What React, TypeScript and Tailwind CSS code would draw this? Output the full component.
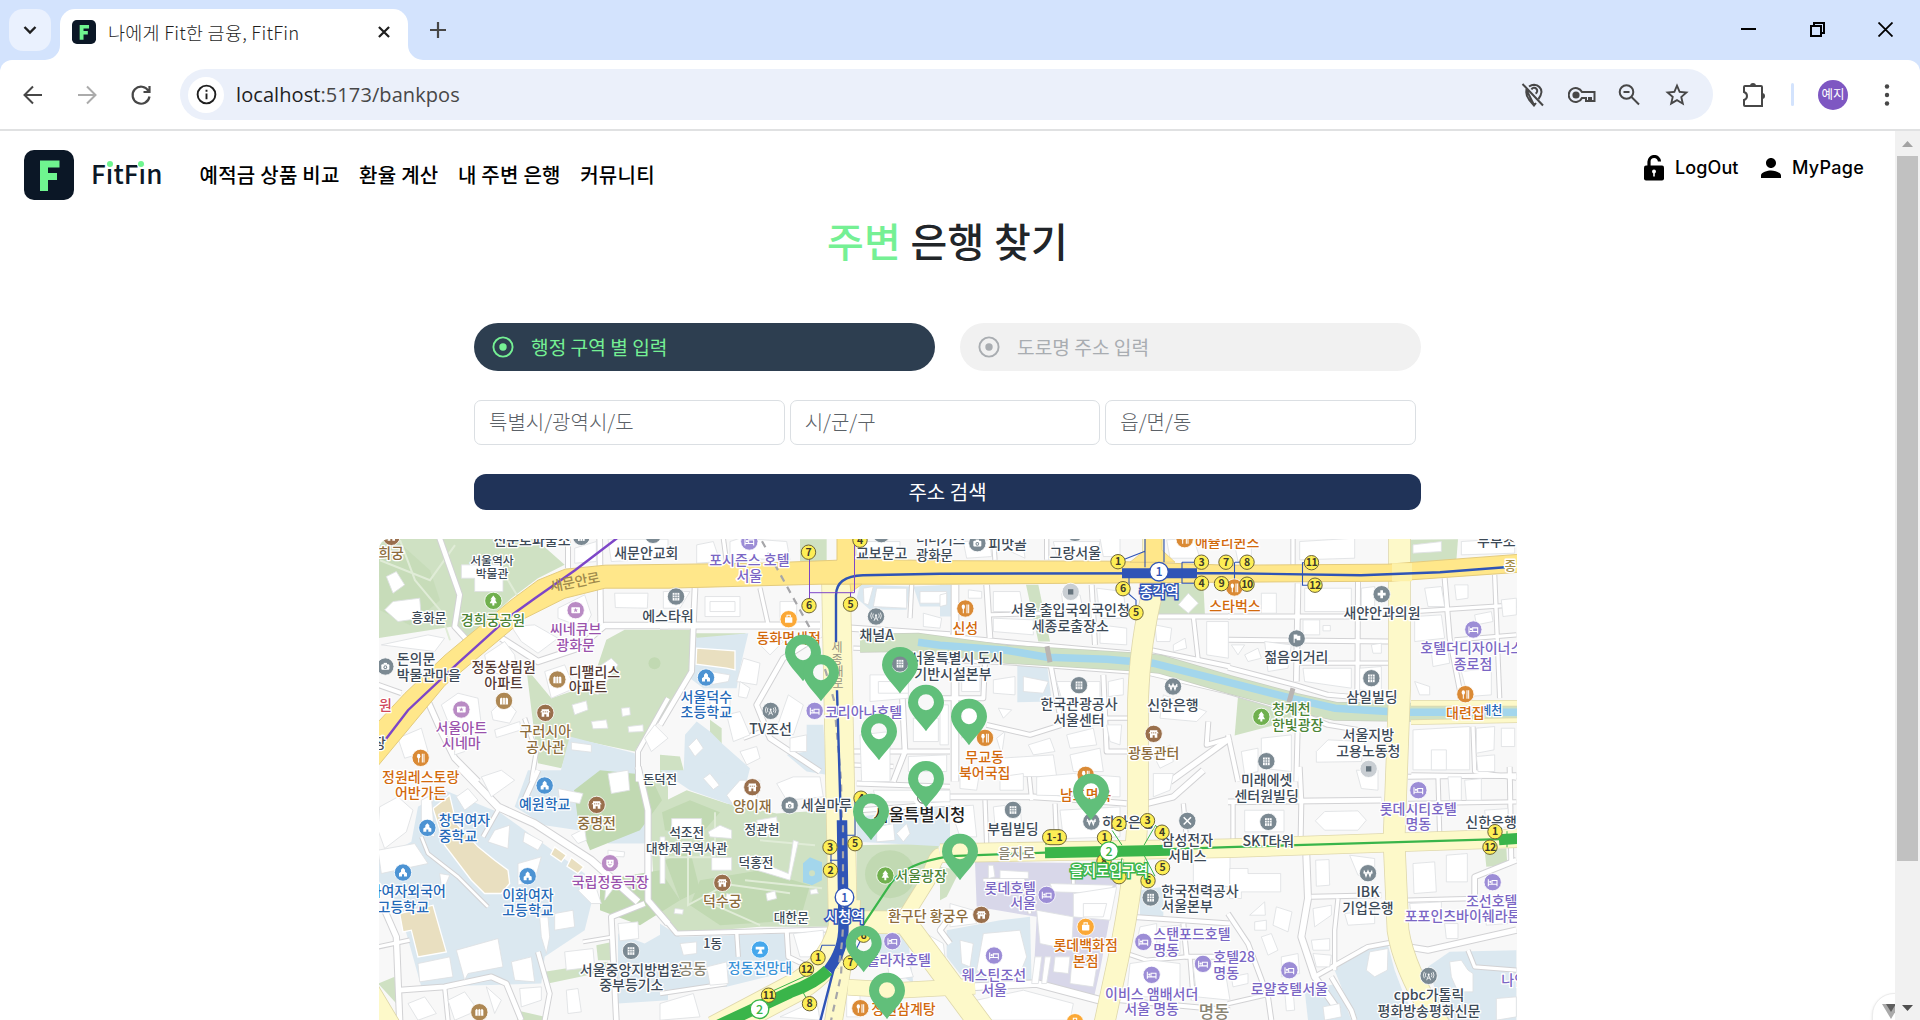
import React from "react";
import { MdPerson, MdStarBorder } from "react-icons/md";

const KR = "font-['Noto_Sans_CJK_KR',sans-serif]";

/* ---------- map data: each sector is drawn in its own 3x local grid ---------- */

type Label = [number, number, string, string, number?, ("start" | "end" | "middle")?];
type Poi = [number, number, string];
type Sector = {
  x: number;
  y: number;
  green: string;
  blue: string;
  tan?: string;
  violet?: string;
  roads: string;
  buildings: string;
  labels: Label[];
  pois: Poi[];
};

const INK: Record<string, string> = {
  g: "#3d4a57",
  p: "#7a66c4",
  o: "#d2690c",
  b: "#2469b8",
  c: "#8c6c3c",
  m: "#9a52ac",
  t: "#4b8436",
  n: "#553a33",
  v: "#3a93d8",
  r: "#d0485c",
  y: "#a58d45",
  k: "#222222",
  s: "#8a8574",
};

const sectors: Sector[] = [
  {
    x: 378, y: 538,
    green: "0,0 470,0 560,80 480,120 400,180 265,305 225,265 0,300;685,305 740,275 955,275 940,370 870,480 770,640 580,600 550,690 480,675 445,390 520,480 640,440",
    blue: "575,595 770,645 780,730 540,730",
    roads: "14|185,0 245,170 230,265 290,330;16|370,300 480,370 600,330 680,262 870,262;14|665,0 668,260;12|570,0 570,90;12|0,440 70,465;16|150,490 190,580 230,660 300,730;10|440,540 475,640 460,730;12|870,480 780,640 780,730",
    buildings: "25,115 55,100 80,140 45,165;20,215 45,190 125,180 130,240 60,250;250,80 375,80 375,160 290,160 290,120 250,120;540,210 620,170 640,230 620,270 540,240;710,165 810,165 808,210 712,208;400,265 470,260 540,300 480,345 430,310;320,350 380,310 410,350 420,420 330,400;500,400 560,380 590,450 520,480;640,400 700,360 720,380 660,470 640,460;340,520 380,480 415,520 395,555 345,545;190,500 240,465 300,480 310,560 210,550;350,575 425,550 430,575 355,598;582,500 625,488 630,515 590,530;640,550 685,545 690,570 645,572;730,510 755,508 757,530 733,535;580,612 640,620 640,642 580,635;750,565 795,560 796,580 752,582;60,600 130,570 150,640 80,660;230,600 265,590 260,640 230,650;590,30 655,10 655,70 590,75;690,3 870,3 870,60 700,70;10,320 150,290 200,300 170,340;800,600 830,560 870,600 820,640",
    labels: [
      [20, 45, "경희궁", "c"], [342, 67, "서울역사\n박물관", "g", 35.5], [462, 5, "신문로파출소", "g"], [805, 45, "새문안교회", "g"],
      [345, 245, "경희궁공원", "t"], [153, 239, "흥화문", "g", 38], [593, 272, "씨네큐브\n광화문", "m"], [870, 232, "에스타워", "g"],
      [56, 362, "돈의문\n박물관마을", "g", 42, "start"], [377, 387, "정동상림원\n아파트", "n"], [572, 400, "디팰리스\n아파트", "n", 42, "start"],
      [22, 500, "원", "r"], [4, 614, "장", "g"], [250, 568, "서울아트\n시네마", "m"], [502, 578, "구러시아\n공사관", "c"], [128, 716, "정원레스토랑\n어반가든", "o"],
    ],
    pois: [[40, -4, "palace"], [610, -4, "gray"], [825, -10, "gray"], [346, 188, "tree"], [593, 216, "star"], [22, 385, "camera"], [538, 424, "apt"], [378, 488, "apt"], [502, 524, "palace"], [250, 514, "star"], [128, 659, "food"]],
  },
  {
    x: 378, y: 770,
    green: "500,605 690,575 700,600 510,640;655,525 705,515 705,570 660,570;0,640 50,620 55,700;415,720 500,740 500,760 420,760;810,50 870,0 870,440 830,390",
    blue: "120,110 200,60 370,130 620,310 640,400 620,480 500,560 490,640 130,650 60,400 0,330 0,270 100,215;450,0 780,0 805,100 800,220 690,220 680,150 600,180 500,165 410,110;720,490 800,520 870,480 870,690 720,700",
    tan: "165,115 215,75 235,160 300,230 350,270 390,300 395,340 370,370 320,370 280,330 200,225;65,430 165,405 205,545 120,560 100,480 75,485;530,230 565,255 550,275 518,253;580,262 617,290 600,310 567,288",
    roads: "20|245,-10 360,110 470,160 640,270 780,395;14|430,110 480,0;10|360,120 315,200;16|20,420 55,500 65,750;14|65,660 200,650 340,620 385,640 430,750;10|200,650 210,750;12|480,545 515,670 500,750;16|780,-10 810,120 810,390 870,460;14|800,400 700,440 715,750;8|615,515 705,500;8|130,200 150,250 240,320 330,410;10|0,530 95,510",
    buildings: "5,110 60,80 105,120 85,185 20,235 0,180;130,90 160,75 170,200 130,190;235,80 270,55 300,90 260,120;350,180 395,165 390,235 330,215;440,185 495,215 480,240 435,215;540,55 615,70 605,100 545,90;690,10 750,0 755,60 700,70;580,195 620,175 625,210 600,220;420,280 490,260 470,330 420,345;0,240 110,220 150,280 10,310;235,540 360,505 375,590 270,610 260,630;120,580 215,560 225,620 125,635;400,575 460,560 470,635 410,630;485,440 510,440 515,500 505,550 490,500;530,430 585,420 590,470 530,480;560,545 645,535 650,590 565,600;720,460 780,455 782,505 725,512;90,700 140,680 175,730 120,750;210,690 260,665 300,720 230,750;325,650 370,690 350,730;425,655 490,650 490,690 430,710;565,660 600,655 610,725 570,730;600,360 650,340 670,400 640,400;685,330 710,350 680,390;310,20 370,0 410,30 340,80;690,240 740,245 738,260 690,258;185,310 215,315 205,340 190,345",
    labels: [
      [500, 101, "예원학교", "b"], [656, 158, "중명전", "c"], [182, 150, "창덕여자\n중학교", "b", 42, "start"], [88, 362, "화여자외국어", "b"], [76, 411, "고등학교", "b"],
      [450, 373, "이화여자\n고등학교", "b"], [697, 334, "국립정동극장", "m"], [760, 598, "서울중앙지방법원\n중부등기소", "g"],
    ],
    pois: [[500, 46, "school"], [656, 104, "palace"], [148, 173, "school"], [75, 307, "school"], [449, 318, "school"], [696, 279, "face"], [759, 542, "gray"], [304, 726, "apt"]],
  },
  {
    x: 660, y: 538,
    green: "420,3 500,3 500,75 420,75;105,285 260,285 220,300 110,300;0,275 95,280 90,400 40,500 0,540;150,545 185,570 185,620 150,600;600,305 745,295 870,300 870,345 760,332 600,330;0,650 60,655 80,730 0,730",
    blue: "95,300 265,285 240,390 230,450 130,450 90,420;600,140 750,145 740,215 630,215 590,180;760,145 870,140 870,205 780,205;110,550 150,580 190,620 270,690 260,730 70,730 75,590;490,560 500,710 440,700 380,650 440,640 440,560",
    tan: "110,330 225,338 225,395 200,390 108,378",
    roads: "10|300,150 325,262;18|0,262 480,262;14|105,150 100,262 95,400 0,560;14|480,290 370,360 290,500 330,600 480,700;16|570,270 870,290;14|720,330 735,640 700,730;12|580,640 870,640;10|580,330 870,338;10|755,140 750,240;10|250,600 330,570;10|190,0 200,75;10|570,680 700,685",
    buildings: "135,175 240,175 240,235 135,235;150,190 225,190 225,220 150,220;10,160 90,160 60,210 10,210;360,190 410,190 410,250 360,250;250,360 300,375 290,440 230,430;240,430 270,450 260,480 235,475;300,320 340,290 370,310 330,350;385,470 430,500 400,590 350,570;200,530 240,520 270,590 220,610;85,625 110,600 130,630 105,655;240,640 290,625 300,660 260,680;650,150 740,150 740,210 640,205;780,160 860,160 860,195 780,195;790,225 845,240 840,270 790,265;630,410 745,410 745,480 630,490;655,430 745,430 745,465 655,465;760,540 835,540 835,610 760,610;600,590 690,580 690,730 605,730;745,655 860,650 860,700 745,700;110,20 160,10 180,70 110,75;210,10 240,0 380,10 390,65 210,60;590,10 720,10 720,50 590,50;150,400 210,410 205,430 150,440;150,480 210,480 210,520 150,510;390,600 440,590 440,640 390,640;610,150 640,145 625,200 612,195",
    labels: [
      [268, 66, "포시즌스 호텔\n서울", "p"], [386, 299, "동화면세점", "o"], [665, 45, "교보문고", "g"], [768, 3, "더더커스\n광화문", "g", 40, "start"],
      [650, 291, "채널A", "g"], [139, 475, "서울덕수\n초등학교", "b"], [332, 573, "TV조선", "g"], [495, 521, "코리아나호텔", "p", 42, "start"], [750, 360, "서울특별시 도시", "g", 42, "start"], [763, 408, "기반시설본부", "g", 42, "start"],
    ],
    pois: [[268, 10, "hotel"], [48, 175, "build"], [386, 243, "shop"], [648, 235, "antenna"], [138, 418, "school"], [332, 518, "antenna"], [464, 518, "hotel"], [720, 376, "build"], [664, -12, "gray"]],
  },
  {
    x: 660, y: 770,
    green: "0,100 80,60 200,100 350,130 500,120 505,470 300,470 50,490 0,420;590,225 840,220 770,400 620,440 590,420",
    blue: "0,0 160,0 240,20 230,110 90,60;0,460 60,500 380,490 400,600 200,650 0,660;590,140 870,110 870,230 590,215;640,480 740,470 760,640 640,560",
    roads: "12|0,430 50,490 505,478;10|230,485 235,560;12|600,120 870,100;12|380,480 385,560 470,600;12|590,40 870,50;10|0,670 200,640;14|870,520 840,480 870,440",
    buildings: "130,25 150,10 178,45 160,58;35,145 125,145 125,200 35,200;145,185 180,165 215,180 215,205 150,200;250,255 385,310 400,210 415,215 390,330 240,285;155,262 215,262 215,300 155,300;318,370 345,362 350,385 322,392;45,415 70,418 68,432 42,430;450,360 470,355 475,370 452,372;200,75 240,30 300,30 290,90 230,120;350,40 400,20 480,20 490,80 380,90;60,520 110,515 110,550 70,555;140,590 200,575 205,640 150,645;400,490 490,480 490,560 420,560;650,170 700,160 705,210 650,215;710,190 740,160 750,190 730,215;680,570 740,560 760,620 690,630;640,60 870,60 870,95 650,95;0,700 100,670 120,740 0,750;780,480 850,520 860,600 790,560;200,370 240,380 230,400 195,395;0,200 15,200 15,340 0,340;360,740 470,690 480,750;560,670 600,670 600,740 560,740;290,150 350,140 355,190 300,195",
    labels: [
      [0, 28, "돈덕전", "g", 37], [277, 106, "양이재", "c"], [422, 105, "세실마루", "g", 42, "start"], [80, 188, "석조전\n대한제국역사관", "g", 38], [306, 178, "정관헌", "g", 38],
      [288, 276, "덕홍전", "g", 38], [187, 392, "덕수궁", "c"], [394, 441, "대한문", "g", 38], [158, 520, "1동", "g", 38], [99, 596, "공동", "s", 46], [300, 592, "정동전망대", "v"],
      [640, 135, "서울특별시청", "k", 50, "start"], [706, 316, "서울광장", "t", 42, "start"], [684, 436, "환구단 황궁우", "c", 42, "start"], [620, 568, "플라자호텔", "p", 42, "start"], [634, 716, "정원삼계탕", "o", 42, "start"],
    ],
    pois: [[277, 51, "palace"], [389, 105, "camera"], [187, 338, "palace"], [300, 538, "view"], [676, 316, "tree"], [697, 513, "hotel"], [601, 714, "food"], [788, 84, "ring"]],
  },
  {
    x: 940, y: 538,
    green: "258,140 295,140 330,310 295,310;650,140 790,135 795,235 655,230",
    blue: "0,140 35,140 35,235 0,235;232,380 320,370 335,490 232,492",
    roads: "14|140,140 150,300;20|45,140 45,730;12|455,140 465,320;10|150,230 330,225;12|0,290 50,298 570,345;12|0,365 200,372 570,400;12|330,370 365,560 270,590 140,560;12|490,410 500,640 565,640;12|0,480 130,480 135,370;12|640,235 870,235;10|760,235 775,370;12|630,335 870,385;12|630,405 870,462;10|500,540 565,540;12|805,550 800,620 870,600;16|870,600 690,730;10|160,0 165,65;10|320,0 320,65",
    buildings: "160,160 240,160 250,220 160,220;85,155 125,160 125,180 85,180;160,425 225,415 225,470 160,465;250,415 325,430 310,465 250,460;175,510 215,515 190,540;365,165 420,170 430,220 370,220;715,200 745,165 775,195 745,225;645,260 695,270 690,310 650,310;700,320 735,300 740,330 700,340;500,560 545,560 540,620 510,610;505,430 550,420 550,470 505,475;265,620 330,600 345,640 280,650;380,590 460,570 470,620 390,630;170,600 195,580 185,650;390,650 480,630 490,700 400,700;180,660 340,650 350,715 180,715;0,170 20,165 20,200 0,205;670,470 800,520 770,550 660,540;640,650 690,620 700,670 660,690;70,10 150,5 155,55 80,60;190,30 250,20 255,60;340,10 480,10 470,55 350,55;480,0 540,0 540,55 490,55;470,150 550,160 560,240 480,240;480,260 560,270 560,320 480,315;160,240 280,245 280,290 160,280;800,250 865,250 865,360 800,350;350,430 480,430 480,560 390,570;65,385 120,385 120,460 65,460;65,500 130,500 120,550 65,600;0,500 25,500 25,620 0,620;680,5 760,0 780,60 690,60",
    labels: [
      [145, 18, "피맛골", "g", 42, "start"], [406, 43, "그랑서울", "g"], [765, 10, "애슐리퀸즈", "o", 42, "start"], [76, 268, "신성", "o"], [391, 216, "서울 출입국외국인청\n세종로출장소", "g"],
      [417, 497, "한국관광공사\n서울센터", "g"], [699, 500, "신한은행", "g"], [641, 643, "광통관터", "c"], [134, 656, "무교동\n북어국집", "o"], [885, 203, "스타벅스", "o"],
    ],
    pois: [[112, 15, "camera"], [734, 3, "food"], [405, -16, "gray"], [76, 211, "food"], [392, 161, "dot"], [417, 441, "build"], [699, 445, "won"], [641, 587, "palace"], [135, 599, "food"], [883, 148, "food"], [437, 712, "food"]],
  },
  {
    x: 940, y: 770,
    green: "0,290 60,300 20,380 0,390",
    blue: "20,480 180,450 270,440 275,640 90,650 20,560;0,80 20,60 10,210 0,210;600,360 670,350 670,440 600,440",
    violet: "105,275 550,280 525,360 480,600 460,690 320,640 280,640 290,440 110,410",
    roads: "14|20,80 280,80 430,90 560,100;10|135,90 140,220;10|265,-10 275,90;10|345,100 350,215;16|620,100 700,80 790,0;20|90,650 290,640 480,690;12|570,440 870,460;12|730,460 740,560 870,560;10|560,550 620,570 740,560;12|540,690 870,720;10|750,560 760,690;10|730,100 740,210;8|130,330 250,330 270,430;8|400,280 400,360",
    buildings: "160,110 240,100 245,165 165,165;145,285 160,285 165,320 145,325;180,300 265,305 265,325 180,325;330,340 520,345 510,370 340,365;290,420 400,440 395,540 300,520;400,370 530,350 510,450 400,440;430,400 500,400 490,440 430,440;285,560 305,560 295,640 275,640;315,560 333,560 320,640 305,640;345,560 390,560 385,610 340,605;395,580 470,590 460,650 390,640;600,470 650,460 650,520 590,520;660,470 720,465 720,550 660,545;570,580 640,570 720,580 720,680 560,680;760,590 850,570 870,690 770,680;130,490 240,480 260,560 240,610 170,640 110,600;60,510 100,520 90,590 65,580;180,20 250,10 250,60 180,60;60,0 120,0 110,60 60,55;30,110 100,105 110,200 60,200;110,690 250,660 400,700 390,750 150,750;360,120 540,110 540,200 370,205;290,20 400,10 540,20 540,80 290,75;760,250 870,250 870,350 760,340;30,400 100,420 110,460 30,470;640,10 700,10 690,60 640,80",
    labels: [
      [437, 74, "남포면옥", "o"], [487, 154, "하나은행", "g", 42, "start"], [219, 176, "부림빌딩", "g"], [742, 210, "삼성전자\n서비스", "g"], [230, 249, "을지로", "s", 40],
      [288, 352, "롯데호텔\n서울", "p", 42, "end"], [664, 361, "한국전력공사\n서울본부", "g", 42, "start"], [640, 492, "스탠포드호텔\n명동", "p", 42, "start"], [437, 525, "롯데백화점\n본점", "o"],
      [820, 560, "호텔28\n명동", "p", 42, "start"], [162, 613, "웨스틴조선\n서울", "p"], [635, 670, "이비스 앰배서더\n서울 명동", "p"], [822, 725, "명동", "s", 50],
    ],
    pois: [[437, 14, "food"], [219, 119, "build"], [454, 154, "won"], [742, 152, "tool"], [320, 374, "hotel"], [632, 382, "build"], [124, 434, "palace"], [437, 470, "shop"], [610, 515, "hotel"], [162, 556, "hotel"], [789, 581, "hotel"], [635, 614, "hotel"], [405, 756, "shop"]],
  },
  {
    x: 1228, y: 538,
    green: "540,5 690,3 685,68 545,72;30,475 130,490 190,500 200,545 20,592",
    blue: "",
    roads: "10|195,-5 195,80;14|210,135 205,430;12|390,130 388,480;12|0,235 390,235;12|0,305 480,310;10|205,375 480,375;12|0,388 200,440 300,470 480,485;12|0,460 200,520 300,560 480,590;10|555,220 865,200;12|650,120 665,300 700,480;10|800,110 815,480;12|210,530 205,730;12|0,590 30,730;10|735,565 740,700 865,720;10|680,305 865,290;10|550,710 865,715",
    buildings: "20,20 70,10 70,60 30,70;215,10 380,0 380,60 215,65;590,150 640,145 650,205 600,205;560,235 640,230 650,300 560,310;680,140 720,140 720,180 685,185;225,245 275,245 275,290 225,290;285,262 307,262 307,278 285,278;10,320 50,320 30,350;50,350 90,330 100,360 60,370;110,310 190,320 180,390 120,400;400,150 440,145 440,210 400,210;430,320 460,315 460,345 435,345;395,390 460,385 460,460 395,455;560,430 605,445 605,470 575,470;740,230 790,220 795,250 745,260;555,575 725,565 725,695 555,695;610,635 655,635 655,695 610,695;745,570 800,565 798,635 745,645;745,655 800,650 800,700 750,700;820,570 860,570 860,625 820,625;40,640 90,630 90,700 50,710;100,600 190,590 190,700 100,690;265,640 300,605 410,610 400,670 265,672;820,185 865,180 865,230 825,235;610,340 660,335 665,375 615,385;700,400 790,390 790,470 720,475;225,390 370,390 370,450 230,430;100,165 145,165 145,225 100,225;555,20 640,10 640,40 555,45;700,10 860,0 860,45 700,50;230,150 370,150 370,220 230,220",
    labels: [
      [805, 8, "두부조", "g"], [462, 223, "새얀안과의원", "g"], [205, 356, "젊음의거리", "g"], [577, 330, "호텔더디자이너스", "p", 42, "start"], [735, 377, "종로점", "p"],
      [432, 476, "삼일빌딩", "g"], [132, 513, "청계천\n한빛광장", "t", 42, "start"], [790, 517, "계천", "b", 36], [712, 524, "대련집", "o"], [421, 590, "서울지방\n고용노동청", "g"], [847, 82, "종", "y", 38],
    ],
    pois: [[461, 168, "cross"], [206, 301, "flag"], [736, 274, "hotel"], [430, 420, "build"], [712, 468, "food"], [100, 536, "tree"], [422, 692, "dot"], [115, 669, "build"]],
  },
  {
    x: 1228, y: 770,
    green: "770,240 835,235 838,285 775,290",
    blue: "320,600 400,530 480,525 500,600 530,680 570,750 380,750;600,590 665,545 865,540 865,750 650,750;230,660 330,640 370,750 240,750",
    roads: "14|0,95 460,90;12|215,-10 220,95 218,200;10|15,100 15,210;18|235,255 240,385 220,500 260,620 330,720;12|250,380 460,375;10|330,385 320,480 320,600;12|260,620 420,530 500,515;12|0,430 60,520 120,680 130,750;10|0,700 130,670;12|540,20 865,15;10|630,20 635,190;16|540,530 600,540 865,480;10|540,390 740,385;14|740,390 740,320 865,270;12|845,-10 850,280;12|310,620 370,720 380,750;10|540,100 865,95;10|720,540 740,590 865,600",
    buildings: "50,120 168,120 168,185 50,185;262,152 290,124 390,122 415,150 390,180 290,180;5,295 60,295 60,310 158,310 158,365 40,365 40,385 5,385;263,270 303,268 305,345 265,348;555,280 620,275 625,365 558,370;655,255 718,250 718,335 655,335;65,435 110,395 112,435;80,455 115,450 115,480 80,480;145,410 192,425 180,485 135,465;255,415 310,405 310,435 260,470;100,500 130,490 150,540 120,555;250,510 305,505 305,540 255,540;10,620 60,610 60,640 15,650;160,560 210,550 215,610 160,620;285,710 335,700 340,740 290,750;365,255 440,265 440,310 390,315;350,430 440,420 440,460 360,465;545,400 640,395 640,430 550,435;650,460 690,460 690,505 655,505;425,545 480,535 478,600 440,620 415,600;665,575 700,570 720,600 735,610 735,665 690,665 670,620;805,685 865,680 865,740 805,750;660,20 700,20 700,90 665,90;710,30 760,25 760,90 715,90;170,660 195,655 200,720 175,722;385,0 450,0 450,60 400,55;770,120 840,115 840,170 775,175;770,400 840,395 840,460 775,465;255,550 310,555 305,590 265,590",
    labels: [
      [116, 30, "미래에셋\n센터원빌딩", "g"], [571, 115, "롯데시티호텔\n명동", "p"], [712, 155, "신한은행", "g", 42, "start"], [121, 212, "SKT타워", "g"], [420, 365, "IBK\n기업은행", "g"],
      [714, 391, "조선호텔", "p", 42, "start"], [530, 438, "포포인츠바이쉐라톤", "p", 42, "start"], [184, 656, "로얄호텔서울", "p"], [603, 674, "cpbc가톨릭\n평화방송평화신문", "g"], [820, 628, "나인", "p", 42, "start"],
    ],
    pois: [[571, 60, "hotel"], [121, 155, "build"], [420, 309, "won"], [794, 336, "hotel"], [184, 600, "hotel"], [602, 617, "antenna"]],
  },
];

const POI_FILL: Record<string, string> = {
  gray: "#7b8992", build: "#7b8992", camera: "#7b8992", antenna: "#7b8992", won: "#7b8992", cross: "#7b8992", flag: "#7b8992", tool: "#7b8992",
  hotel: "#9c8dd6", food: "#da8a35", shop: "#fba836", school: "#4c93d3", palace: "#996f4c", apt: "#ad8753",
  star: "#b98bc4", face: "#b98bc4", tree: "#70b04e", view: "#45a7ec", dot: "#c9ced3", ring: "#ffffff",
};

/* white symbol inside a point-of-interest disc, centred on the origin */
function Glyph({ kind }: { kind: string }) {
  const line = { fill: "none", stroke: "#fff", strokeWidth: 3.2 };
  switch (kind) {
    case "hotel":
      return <g><path d="M-13 -9V12M-13 6H13M13 12V-5H-2V6" {...line} /><circle cx="-7" cy="-1" r="3.4" fill="#fff" /></g>;
    case "food":
      return <g><ellipse cx="-6" cy="-5" rx="5" ry="7" fill="#fff" /><path d="M-6 0V14M5 -12V14M10 -12V14" {...line} /></g>;
    case "shop":
      return <g><rect x="-11" y="-6" width="22" height="17" rx="2" fill="#fff" /><path d="M-5 -6V-12H5V-6" {...line} /></g>;
    case "school":
      return <path d="M-12 12V2L-6 -2V-8L0 -14L6 -8V-2L12 2V12H3V5H-3V12Z" fill="#fff" />;
    case "palace":
      return <g><path d="M-16 -2L-11 -6V-11H11V-6L16 -2H11V12H3V4H-3V12H-11V-2Z" fill="#fff" /><path d="M-8 -3H8" stroke="#996f4c" strokeWidth="2.500" strokeDasharray="4 2" /></g>;
    case "apt":
      return <g><path d="M-12 11V-6L-8 -10L-4 -6L0 -10L4 -6L8 -10L12 -6V11Z" fill="#fff" /><path d="M-4 -6V11M4 -6V11" stroke="#ad8753" strokeWidth="2" /></g>;
    case "star":
      return <g><rect x="-13" y="-9" width="26" height="18" rx="2" fill="#fff" /><path d="M0 -7L2 -2H7L3 1L5 6L0 3L-5 6L-3 1L-7 -2H-2Z" fill="#b98bc4" /></g>;
    case "face":
      return <g><path d="M-11 -10H11V3Q8 13 0 13T-11 3Z" fill="#fff" /><path d="M-5 3Q0 9 5 3M-5 -5V-1M5 -5V-1" stroke="#b98bc4" strokeWidth="2.5" fill="none" /></g>;
    case "tree":
      return <path d="M0 -16L9 -4H5L11 7H3V14H-3V7H-11L-5 -4H-9Z" fill="#fff" />;
    case "camera":
      return <g><rect x="-12" y="-7" width="24" height="17" rx="3" fill="#fff" /><rect x="-5" y="-11" width="10" height="5" fill="#fff" /><circle r="5.5" cy="2" fill="#7b8992" /><circle r="2.6" cy="2" fill="#fff" /></g>;
    case "antenna":
      return <g><path d="M0 -2L-6 13M0 -2L6 13M-4 7H4M-8 -9Q-12 -2 -8 4M8 -9Q12 -2 8 4M-13 -12Q-19 -2 -13 7M13 -12Q19 -2 13 7" {...line} strokeWidth={2.4} /><circle cy="-4" r="3" fill="#fff" /></g>;
    case "won":
      return <path d="M-12 -8L-6 9L0 -7L6 9L12 -8M-14 -1H14" {...line} strokeWidth={3.6} />;
    case "cross":
      return <path d="M0 -12V12M-12 0H12" {...line} strokeWidth={8} />;
    case "flag":
      return <path d="M-9 13V-12H2V-8H11V5H0V1H-6V13Z" fill="#fff" />;
    case "tool":
      return <path d="M-11 -11L11 11M11 -11L-11 11" {...line} strokeWidth={4.5} />;
    case "view":
      return <path d="M-13 -8H13V0H5V4L8 13H-8L-2 4V0H-13Z" fill="#fff" />;
    case "dot":
      return <rect x="-8" y="-8" width="16" height="16" fill="#66747e" />;
    case "ring":
      return <circle r="15" fill="none" stroke="#555" strokeWidth="3" />;
    default:
      return <g><rect x="-10" y="-11" width="20" height="23" fill="#fff" /><path d="M-3.500 -11V12M3.500 -11V12M-10 -4H10M-10 3H10" stroke="#7b8992" strokeWidth="2" /></g>;
  }
}

const list = (s: string) => s.split(";").filter(Boolean);
const at = (s: Sector) => `translate(${s.x} ${s.y}) scale(0.33333)`;

function MinorRoads({ s, casing }: { s: Sector; casing?: boolean }) {
  return (
    <g transform={at(s)} fill="none" strokeLinejoin="round">
      {list(s.roads).map((r, i) => {
        const [w, pts] = r.split("|");
        return <polyline key={i} points={pts} stroke={casing ? "#d2d2d4" : "#ffffff"} strokeWidth={Number(w) + (casing ? 6 : 0)} />;
      })}
    </g>
  );
}

function MapLabel({ l }: { l: Label }) {
  const [x, y, text, ink, size = 42, anchor = "middle"] = l;
  return (
    <text x={x} y={y} textAnchor={anchor} fontSize={size} fill={INK[ink]} fontWeight={500} stroke="#fff" strokeWidth="8" strokeLinejoin="round" paintOrder="stroke">
      {text.split("\n").map((t, i) => (
        <tspan key={i} x={x} y={y + size * 0.36 + i * (size < 38 ? 39 : 47)}>{t}</tspan>
      ))}
    </text>
  );
}

/* station exits: x, y, number */
const exits: [number, number, string][] = [
  [808.5, 552, "7"], [860, 540, "4"], [809, 605.500, "6"], [850.500, 604, "5"], [1118, 561.500, "1"], [1123, 588.500, "6"], [1136, 612.500, "5"],
  [1201.500, 562, "3"], [1201.500, 583, "4"], [1226, 562, "7"], [1247, 562, "8"], [1221.500, 583.500, "9"], [1247, 584, "10"], [1311.500, 562.500, "11"], [1315, 585, "12"],
  [861, 798, "4"], [830, 847, "3"], [830.500, 870, "2"], [855, 843.500, "5"], [863.500, 935, "6"], [818, 957.500, "1"], [806.500, 969, "12"], [850.500, 962.500, "7"], [768.500, 995, "11"], [809.500, 1003.500, "8"],
  [1104.500, 837.500, "1"], [1119, 823.500, "2"], [1147.500, 820.500, "3"], [1162, 832, "4"], [1162.500, 867.500, "5"], [1148, 880.500, "6"], [1119, 876.500, "7"], [1104, 861, "8"],
  [1495, 831.500, "1"], [1490, 847, "12"],
];

const pins: [number, number][] = [
  [803, 681], [821, 701], [900, 693.300], [926, 731], [879, 760], [969, 745], [926, 807.300], [871, 840], [960, 880], [1091, 820], [863.700, 972], [887, 1019],
];

function Station({ x, y, n, name, ny, color }: { x: number; y: number; n: string; name: string; ny: number; color: string }) {
  return (
    <g>
      <circle cx={x} cy={y} r="9.300" fill="#fff" stroke={color} strokeWidth="1.400" />
      <text x={x} y={y + 4.500} fontSize="12.500" textAnchor="middle" fill={color} fontWeight={500}>{n}</text>
      <text x={x} y={ny} fontSize="14.500" textAnchor="middle" fill="#fff" stroke={color} strokeWidth="3" paintOrder="stroke" fontWeight={500} letterSpacing="-0.3">{name}</text>
    </g>
  );
}

const BLUE = "#2f54b6";
const GREEN = "#3ab54a";
const PALE = "#fdf9c9";
const PALE_EDGE = "#dfd8ac";
const AMBER = "#ffe78a";
const AMBER_EDGE = "#e3cb7e";

const paleRoads: [number, string][] = [
  [28, "M836 580L840 780L843 930"],
  [28, "M846 900Q846 955 800 985L715 1030"],
  [17, "M846 940Q842 970 832 1030"],
  [20, "M1153 530L1153 590Q1140 640 1138 700V810Q1135 880 1118 960L1104 1025"],
  [21, "M1399.500 530V690L1397 760L1394 840L1398 930Q1404 970 1440 1026"],
  [18, "M940 853L1228 848L1520 838"],
  [22, "M855 922H905L985 1030"],
  [14, "M940 855Q935 856 928 880L903 920"],
  [15, "M848 987L900 990L975 986"],
  [5, "M1411 703L1520 703"],
  [4, "M1411 722L1520 720"],
];

function BankMap() {
  return (
    <svg className="block h-[482px] w-[1138px] rounded-t-[10px] bg-[#f8f8f8]" viewBox="379 538.800 1138 482" fontFamily="'Noto Sans CJK KR', sans-serif">
      {sectors.map((s, k) => (
        <g key={k} transform={at(s)}>
          {list(s.green).map((p, i) => <polygon key={i} points={p} fill="#cfe1c3" />)}
          {list(s.blue).map((p, i) => <polygon key={i} points={p} fill="#dbe8f0" />)}
          {list(s.violet ?? "").map((p, i) => <polygon key={i} points={p} fill="#d8d7e9" />)}
          {list(s.tan ?? "").map((p, i) => <polygon key={i} points={p} fill="#e9dfc0" stroke="#fff" strokeWidth="4" />)}
        </g>
      ))}

      {/* woods and garden paths in the parks */}
      <g fill="#c1d9b2">
        <path d="M379 555L400 543L430 570L440 600L410 625L380 610Z" opacity="0.6" />
        <circle cx="654.500" cy="663" r="6" />
        <path d="M662 812L690 800L720 812L700 835L665 830ZM700 880L760 870L810 885L800 920L720 925L690 905Z" />
        <path d="M665 860L690 850L700 890L680 900Z" />
        <path d="M574 790L600 770L650 775L662 800L640 830L590 850L578 820ZM600 880L660 870L680 900L640 925L600 910Z" />
        <ellipse cx="890" cy="874" rx="25" ry="24" />
      </g>
      <g fill="none" stroke="#e0ecd7" strokeWidth="2">
        <path d="M662 857H715V812M688 845V905L727 884L790 893M745 880L822 888M715 905L760 925M760 840L815 845M400 540L415 580L440 610L450 640M455 545L430 580L380 560M480 560L505 575L520 600" />
      </g>
      <path d="M803 863L810 857L822 862V880L812 885L803 882Z" fill="#a3d6ec" />
      <circle cx="812" cy="873" r="3" fill="#cfe1c3" />

      {sectors.map((s, k) => <MinorRoads key={k} s={s} casing />)}
      {sectors.map((s, k) => <MinorRoads key={k} s={s} />)}

      {sectors.map((s, k) => (
        <g key={k} transform={at(s)} fill="#ffffff" stroke="#dfe1e3" strokeWidth="2.600">
          {list(s.buildings).map((p, i) => <polygon key={i} points={p} />)}
        </g>
      ))}

      {/* stream */}
      <path d="M860 643L918 642L1006 654L1140 662L1160 664L1228 684L1295 702L1335 711L1400 712H1520" fill="none" stroke="#c9cfc3" strokeWidth="19" />
      <path d="M860 643L918 642L1006 654L1140 662L1160 664L1228 684L1295 702L1335 711L1400 712H1520" fill="none" stroke="#cfe1c3" strokeWidth="17.500" />
      <path d="M918 642L940 645L1006 650L1047 657L1107 659L1153 663L1228 682L1295 699L1335 708L1400 712H1520" fill="none" stroke="#a3d6ec" strokeWidth="7.500" />
      <path d="M1047 646L1050 662M1293 688L1289 702" stroke="#b9b5b3" strokeWidth="5" />

      {/* arterial roads */}
      <path d="M378 985L402 1025H378Z" fill={PALE} stroke={PALE_EDGE} />
      {paleRoads.map(([w, d], i) => <path key={i} d={d} fill="none" stroke={PALE_EDGE} strokeWidth={w + 1.600} />)}
      {paleRoads.map(([w, d], i) => <path key={i} d={d} fill="none" stroke={PALE} strokeWidth={w} />)}
      <path d="M376 724L405 693L445 655L511 600L538 580L565 569L605 565L760 563L837 560V530H855V559L940 560.500L1110 561L1228 565L1388 564L1520 554V572L1391 581L1228 582L940 584L820 584L668 588L605 588L565 598L525 618L445 685L376 768Z" fill={AMBER} stroke={AMBER_EDGE} strokeWidth="1" />
      <path d="M1130 562L1145 550V538H1162V550L1175 562ZM851 592L862 584H850Z" fill={AMBER} stroke={AMBER_EDGE} strokeWidth="0.800" />
      <rect x="1392" y="563" width="20" height="18" fill="#fdf1a8" />

      {/* subway and rail lines */}
      <path d="M762 541L810 628L826 672L834 700L841 780L844 920L841 975L830 1025" fill="none" stroke="#a6a6a9" strokeWidth="2.200" strokeDasharray="7 6" />
      <path d="M385 740L408 710L458 663L510 616L535 598L575 570L617 538" fill="none" stroke="#7d46c8" strokeWidth="2.400" />
      <path d="M1505 567L1440 572L1361 575L1228 573L940 573.500L863 575Q836 576 836 595V642M837 690L841 825M836 960L820 1022" fill="none" stroke={BLUE} strokeWidth="2.400" />
      <path d="M809.500 555V603M809.500 592.500H854.500V540M850.500 592V604" fill="none" stroke="#7d46c8" strokeWidth="1" />
      <path d="M842 820L843.500 925Q844 950 828 970" fill="none" stroke={BLUE} strokeWidth="10.500" />
      <path d="M843 825V925Q842 950 838 968" fill="none" stroke="#a6a6a9" strokeWidth="2.200" strokeDasharray="7 6" />
      <path d="M828 970Q815 983 790 992L715 1027" fill="none" stroke={GREEN} strokeWidth="12" />
      <path d="M861 928L891 883Q905 863 950 856L1045 852.500M1170 849L1228 847L1500 839" fill="none" stroke={GREEN} strokeWidth="2.200" />
      <path d="M1045 852.500L1170 850" stroke={GREEN} strokeWidth="11" />
      <path d="M1499 839.500L1520 838" stroke={GREEN} strokeWidth="11" />
      <path d="M1122 573H1197" stroke={BLUE} strokeWidth="10" />
      <path d="M1145 538V567M1164 538V562M1118 561.500L1145 551M1129 577V594L1136 600V612M1182 562H1201M1182 562V583H1201M1235 562H1247M1234.500 562V580M1302 562.500H1311M1302.500 562V585H1315M830 860H840M831 847V870M845 835H855V800M835 945H822L818 957M850 962L863 935" fill="none" stroke={BLUE} strokeWidth="1.100" />
      <path d="M1105 838L1122 850M1112 830L1122 845M1155 826L1144 845M1144 855L1155 876M1122 855L1105 862M1122 858L1118 876M1046 838V845M1165 833L1155 825M1507 831V847M770 992L805 976M809 1003L803 992" fill="none" stroke={GREEN} strokeWidth="1" />

      {sectors.map((s, k) => (
        <g key={k} transform={at(s)}>
          {s.pois.map(([x, y, kind], i) => (
            <g key={i} transform={`translate(${x} ${y})`}>
              <circle r="26" fill={POI_FILL[kind]} stroke="#fff" strokeWidth="2.500" />
              <Glyph kind={kind} />
            </g>
          ))}
        </g>
      ))}
      {sectors.map((s, k) => (
        <g key={k} transform={at(s)}>
          {s.labels.map((l, i) => <MapLabel key={i} l={l} />)}
        </g>
      ))}
      <text transform="translate(551 591.500) rotate(-11)" fontSize="14" fill="#a08a4c" fontWeight={500} letterSpacing="-0.3">새문안로</text>
      <text fontSize="12" fill="#97937f" textAnchor="middle">
        <tspan x="837" y="652">세</tspan><tspan x="837" y="664">종</tspan><tspan x="838" y="676">대</tspan><tspan x="838" y="688">로</tspan>
      </text>

      {exits.map(([x, y, n], i) => (
        <g key={i}>
          <circle cx={x} cy={y} r="7.200" fill="#fdee55" stroke="#6c6338" strokeWidth="1" />
          <text x={x} y={y + 3.800} fontSize="10.500" fontWeight={700} textAnchor="middle" fill="#3c3a2a" letterSpacing="-0.4">{n}</text>
        </g>
      ))}
      <rect x="1042.500" y="829.500" width="24" height="15" rx="7.500" fill="#fdee55" stroke="#6c6338" strokeWidth="1" />
      <text x="1054.500" y="841" fontSize="10.500" fontWeight={700} textAnchor="middle" fill="#3c3a2a">1-1</text>

      <Station x={1159} y={571.500} n="1" name="종각역" ny={597} color={BLUE} />
      <Station x={844.500} y={897} n="1" name="시청역" ny={922} color={BLUE} />
      <Station x={1109} y={851} n="2" name="을지로입구역" ny={876} color={GREEN} />
      <Station x={759.500} y={1009} n="2" name="" ny={0} color={GREEN} />

      {pins.map(([x, y], i) => (
        <path key={i} transform={`translate(${x} ${y})`} fillRule="evenodd" fill="#61bf7a" d="M0 0C-5 -8 -18 -18 -18 -28.500A18 18 0 0 1 18 -28.500C18 -18 5 -8 0 0ZM0 -37A8 8 0 1 0 0 -21A8 8 0 1 0 0 -37Z" />
      ))}
    </svg>
  );
}

/* ---------- browser frame ---------- */

function FitMark({ className }: { className: string }) {
  return (
    <svg className={className} viewBox="0 0 50 50">
      <rect width="50" height="50" rx="10" fill="#0b1726" />
      <path d="M16 10.500H35.500V17.500H24V23H33V30H24V41H16Z" fill="#6ff58f" />
    </svg>
  );
}

function Ico({ children, className = "size-6" }: { children: React.ReactNode; className?: string }) {
  return (
    <svg className={`${className} shrink-0`} viewBox="0 0 24 24" fill="none" stroke="#474747" strokeWidth="2">
      {children}
    </svg>
  );
}

function TabStrip() {
  return (
    <div className="flex h-[60px] items-start bg-[#d3e3fd] pl-[9px] pt-[9px]">
      <div className="flex h-[42px] w-[42px] items-center justify-center rounded-[14px] bg-[#eaf1fe]">
        <svg width="14" height="10" viewBox="0 0 14 10" fill="none" stroke="#1f1f1f" strokeWidth="2.400"><path d="M1.500 2L7 7.500L12.500 2" /></svg>
      </div>
      <div className="relative ml-[9px] flex h-[51px] w-[348px] items-center rounded-t-[15px] bg-white pb-[5px] pl-3">
        <svg className="absolute -left-[15px] bottom-0 size-[15px]" viewBox="0 0 15 15"><path d="M15 0A15 15 0 0 1 0 15H15Z" fill="#fff" /></svg>
        <svg className="absolute -right-[15px] bottom-0 size-[15px]" viewBox="0 0 15 15"><path d="M0 0A15 15 0 0 0 15 15H0Z" fill="#fff" /></svg>
        <FitMark className="size-6" />
        <span className={`${KR} ml-[12px] w-[270px] whitespace-nowrap text-[18.500px] font-light leading-6 tracking-[0.25px] text-[#1f1f1f]`}>나에게 Fit한 금융, FitFin</span>
        <svg width="12" height="12" viewBox="0 0 13 13" stroke="#1f1f1f" strokeWidth="2.400"><path d="M1 1L12 12M12 1L1 12" /></svg>
      </div>
      <svg className="ml-[22px] mt-[13px]" width="16" height="16" viewBox="0 0 16 16" stroke="#474747" strokeWidth="2.200"><path d="M8 0V16M0 8H16" /></svg>
      <div className="ml-auto mr-[27px] flex items-center gap-[53.500px] pt-[13px]">
        <svg width="15" height="15" stroke="#000" strokeWidth="2"><path d="M0 7H15" /></svg>
        <svg width="15" height="15" fill="none" stroke="#000" strokeWidth="2" shapeRendering="crispEdges"><path d="M1 4H11V14H1ZM4 3V1H14V11H12" /></svg>
        <svg width="15" height="15" stroke="#000" strokeWidth="1.800"><path d="M0.500 0.500L14.500 14.500M14.500 0.500L0.500 14.500" /></svg>
      </div>
    </div>
  );
}

function Toolbar() {
  return (
    <div className="h-[71px] bg-[#d3e3fd]">
      <div className="flex h-[71px] items-center rounded-t-[12px] border-b-2 border-[#e0e1e2] bg-white pl-[21px]">
        <Ico><path d="M21 12H4M12 3.500L3.500 12L12 20.500" /></Ico>
        <Ico className="ml-[30px] size-6 opacity-45"><path d="M3 12H20M12 3.500L20.500 12L12 20.500" /></Ico>
        <Ico className="ml-[30px] size-6"><path d="M19.500 8A8.500 8.500 0 1 0 20.500 13.500M20.500 3V9H14.500" strokeWidth="2.200" /></Ico>
        <div className="ml-[27px] flex h-[51px] w-[1533px] items-center rounded-full bg-[#ebf0fa] pl-2 pr-[22px]">
          <div className="flex size-9 items-center justify-center rounded-full bg-white">
            <svg width="21" height="21" viewBox="0 0 22 22" fill="none" stroke="#1f1f1f" strokeWidth="2"><circle cx="11" cy="11" r="9.300" /><path d="M11 10V16M11 6V8" /></svg>
          </div>
          <span className="ml-3 whitespace-nowrap font-['Open_Sans',sans-serif] text-[20px] leading-7 tracking-[0.08px] text-[#474747]"><span className="text-[#1f1f1f]">localhost</span>:5173/bankpos</span>
          <div className="ml-auto flex items-center">
            <Ico><path d="M1.500 1L22 22.500M8 3.500Q10.500 1.800 13 1.800Q20 2.500 20.500 9Q20 13 17.500 16M5.500 7Q4.500 12 8 16.500L13 22.500L15 20M5 6L13 22M10.500 6.500A3 3 0 1 1 14.500 10.500" /></Ico>
            <svg className="ml-[23px]" width="28" height="18" viewBox="0 0 28 18" fill="none" stroke="#474747" strokeWidth="2"><path d="M14 6A7 7 0 1 0 14 12H18V15H21V12H23V15H26.500V6Z" /><circle cx="8" cy="9" r="2.600" fill="#474747" /></svg>
            <Ico className="ml-[21px] size-6"><circle cx="9.500" cy="9" r="6.800" /><path d="M6.500 9H12.500M14.500 14L22 21.500" /></Ico>
            <MdStarBorder className="ml-[22px] size-[28px] text-[#474747]" />
          </div>
        </div>
        <svg className="ml-7" width="26" height="26" viewBox="0 0 26 26" fill="none" stroke="#474747" strokeWidth="2"><path d="M3 5Q3 4 4 4H20Q21 4 21 5V24H4Q3 24 3 23V18Q6 17 6 14T3 10Z" /><path d="M9 4A2.800 2.800 0 0 1 15 4ZM21 11A2.800 2.800 0 0 1 21 17Z" fill="#474747" stroke="none" /></svg>
        <div className="ml-6 h-[23px] w-[3px] rounded bg-[#d3e3fd]" />
        <div className={`${KR} ml-6 flex size-[30px] items-center justify-center rounded-full bg-[#7e57c2] text-[12.500px] leading-none text-white`}>예지</div>
        <svg className="ml-[36px]" width="6" height="22" fill="#474747"><circle cx="3" cy="2.500" r="2.200" /><circle cx="3" cy="11" r="2.200" /><circle cx="3" cy="19.500" r="2.200" /></svg>
      </div>
    </div>
  );
}

function SiteHeader() {
  return (
    <header className="flex h-[82px] items-start pl-6 pr-[29px] pt-[19px]">
      <FitMark className="size-[50px]" />
      <div className={`${KR} relative ml-[17px] mt-[2.500px] text-[26px] font-medium leading-[40px] tracking-[0.1px] text-[#0b1726]`}>
        FitFin
        <span className="absolute left-[15.500px] top-[8px] size-[6px] rounded-full bg-[#6ff58f] ring-1 ring-white" />
        <span className="absolute left-[46.800px] top-[8px] size-[6px] rounded-full bg-[#6ff58f] ring-1 ring-white" />
      </div>
      <nav className={`${KR} ml-[37px] mt-[9.500px] flex gap-[19.500px] text-[20px] font-medium leading-[30px] tracking-[0.25px] text-black`}>
        <a>예적금 상품 비교</a>
        <a>환율 계산</a>
        <a>내 주변 은행</a>
        <a>커뮤니티</a>
      </nav>
      <div className="ml-auto mt-[3px] flex items-center font-['Inter',sans-serif] text-[18px] font-medium leading-[26px] text-black">
        <svg width="20" height="26" viewBox="0 0 20 26"><path d="M5 13V7A5 5 0 0 1 15.500 6.500" fill="none" stroke="#000" strokeWidth="3.200" /><rect y="10.500" width="20" height="15" rx="2" /><circle cx="10" cy="16.500" r="2" fill="#fff" /><path d="M9.200 17H10.800V21.500H9.200Z" fill="#fff" /></svg>
        <span className="ml-[11px] w-[65px] whitespace-nowrap tracking-[0.1px]">LogOut</span>
        <MdPerson className="ml-4 size-[30px]" />
        <span className="ml-[6px] w-[74px] whitespace-nowrap tracking-[0.3px]">MyPage</span>
      </div>
    </header>
  );
}

function Target() {
  return (
    <svg width="22" height="22" viewBox="0 0 22 22" fill="none" stroke="currentColor" strokeWidth="1.900"><circle cx="11" cy="11" r="9.600" /><circle cx="11" cy="11" r="3.700" fill="currentColor" stroke="none" /></svg>
  );
}

function SearchForm() {
  return (
    <div className={`${KR} w-[947px]`}>
      <div className="flex gap-[25px] text-[19.200px]">
        <div className="flex h-12 flex-1 items-center gap-[17px] rounded-full bg-[#2d3e50] pl-[18px] text-[#75f094]"><Target /><span>행정 구역 별 입력</span></div>
        <div className="flex h-12 flex-1 items-center gap-[17px] rounded-full bg-[#f1f1f1] pl-[18px] text-[#a9adb1]"><Target /><span>도로명 주소 입력</span></div>
      </div>
      <div className="mt-[29px] flex gap-[5px] pr-[5px]">
        {["특별시/광역시/도", "시/군/구", "읍/면/동"].map((p) => (
          <div key={p} className="flex h-[45px] flex-1 items-center rounded-[7px] border border-[#dbdfe3] pb-[2px] pl-[14px] text-[20px] font-light text-[#5b6167]">{p}</div>
        ))}
      </div>
      <div className="mt-[29px] flex h-9 items-center justify-center rounded-[12px] bg-[#203358] pb-[1px] text-[20px] text-white">주소 검색</div>
    </div>
  );
}

export default function App() {
  return (
    <div className="flex h-[1020px] w-[1920px] flex-col overflow-hidden bg-white">
      <TabStrip />
      <Toolbar />
      <div className="flex min-h-0 flex-1">
        <div className="relative flex-1 overflow-hidden">
          <SiteHeader />
          <main className="flex flex-col items-center">
            <h1 className={`${KR} h-[57px] text-[40px] font-medium leading-[54px] tracking-[0.3px] text-[#212529]`}><span className="text-[#75f094]">주변</span> 은행 찾기</h1>
            <div className="mt-[53px]"><SearchForm /></div>
            <div className="mt-[29px]"><BankMap /></div>
          </main>
          <div className="absolute -right-[28px] top-[862px] h-[52px] w-[51px] rounded-[22px] border border-[#ececec] bg-white shadow">
            <svg className="ml-[9px] mt-[10px]" width="18" height="16" viewBox="0 0 18 16"><path d="M0 0H18L9 15Z" fill="#aaa" /><path d="M4 0H14L9 8Z" fill="#5f5f5f" /></svg>
          </div>
        </div>
        <div className="flex w-[25px] flex-col items-center bg-[#f1f1f1]">
          <svg className="mt-[10px]" width="11" height="6"><path d="M0 6L5.500 0L11 6Z" fill="#a3a3a3" /></svg>
          <div className="mt-[9px] h-[705px] w-[21px] bg-[#c1c1c1]" />
          <svg className="mb-[9px] mt-auto" width="11" height="6"><path d="M0 0H11L5.500 6Z" fill="#505050" /></svg>
        </div>
      </div>
    </div>
  );
}
